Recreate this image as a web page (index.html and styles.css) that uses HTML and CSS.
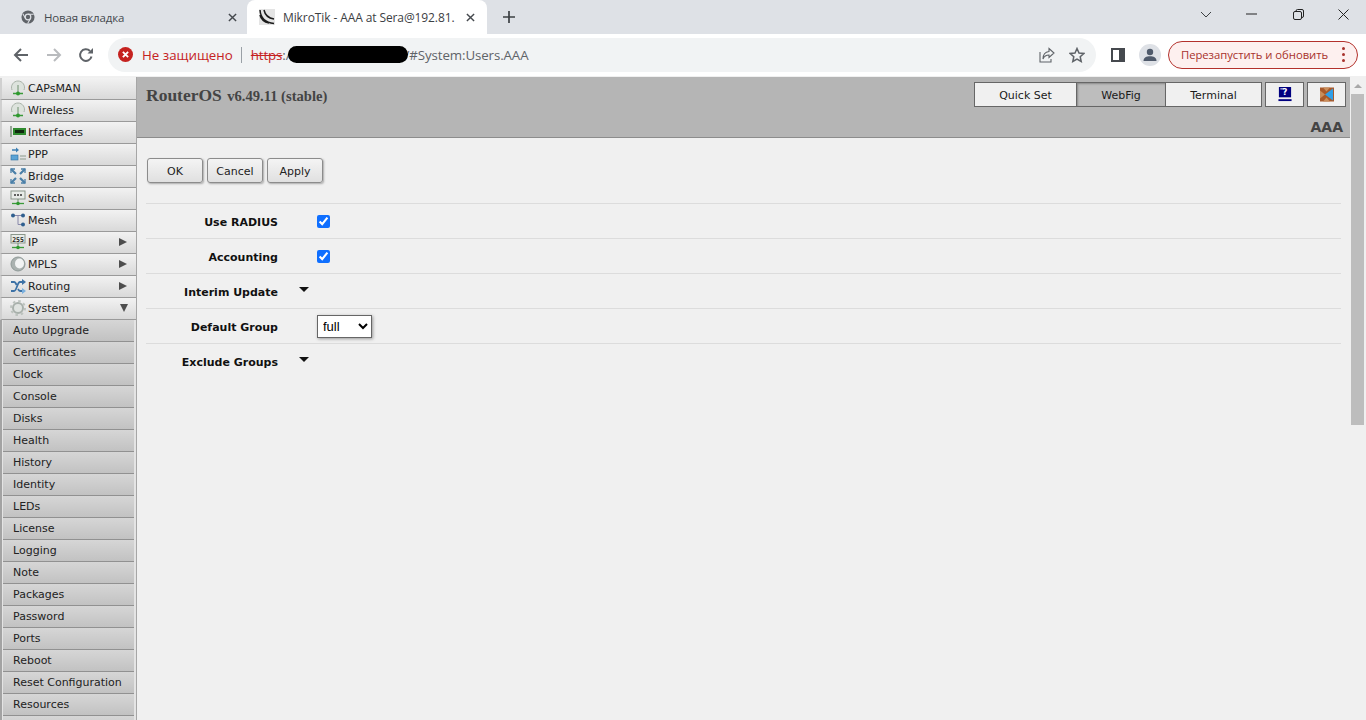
FILE: index.html
```html
<!DOCTYPE html>
<html lang="ru">
<head>
<meta charset="utf-8">
<title>MikroTik - AAA at Sera</title>
<link rel="stylesheet" href="styles.css">
</head>
<body>
<div class="tabbar">
  <div class="tab">
    <svg class="favicon" viewBox="0 0 16 16"><circle cx="8" cy="8" r="7.500" fill="#5f6368"/><circle cx="8" cy="8" r="3.200" fill="#5f6368" stroke="#dee1e6" stroke-width="1.400"/><path d="M8 4.800h6.500M5.200 9.600 2.100 4.400M10.800 9.600 7.600 15.300" stroke="#dee1e6" stroke-width="1.200" fill="none"/></svg>
    <span class="tab-title ru">Новая вкладка</span>
    <svg class="tab-x" viewBox="0 0 10 10"><path d="M1 1l8 8M9 1l-8 8" stroke="#45494e" stroke-width="1.600"/></svg>
  </div>
  <div class="tab active">
    <svg class="favicon" viewBox="0 0 16 16"><rect width="16" height="16" fill="#e4e4e4"/><path d="M1 1c.5 7 5 12.500 14 13.500M1 6c1 4 4 7 9 8M5 1c1 5 4 8 10 9" stroke="#1c1c1c" stroke-width="1.500" fill="none"/></svg>
    <span class="tab-title dark">MikroTik - AAA at Sera@192.81.</span>
    <svg class="tab-x" viewBox="0 0 10 10"><path d="M1 1l8 8M9 1l-8 8" stroke="#45494e" stroke-width="1.600"/></svg>
  </div>
  <svg class="newtab" viewBox="0 0 12 12"><path d="M6 0v12M0 6h12" stroke="#3c4043" stroke-width="1.700"/></svg>
  <div class="winctl">
    <svg class="chev" viewBox="0 0 12 8"><path d="M1 1l5 5 5-5" stroke="#3c4043" stroke-width="1" fill="none"/></svg>
    <svg class="minw" viewBox="0 0 11 2"><path d="M0 1h11" stroke="#222" stroke-width="1"/></svg>
    <svg class="maxw" viewBox="0 0 11 11"><rect x="0.500" y="2.500" width="8" height="8" rx="1.500" fill="none" stroke="#222"/><path d="M3 2.500V2a1.500 1.500 0 0 1 1.500-1.500H9A1.500 1.500 0 0 1 10.500 2v5A1.500 1.500 0 0 1 9 8.500" fill="none" stroke="#222"/></svg>
    <svg class="closew" viewBox="0 0 11 11"><path d="M.5.500l10 10M10.500.500l-10 10" stroke="#222" stroke-width="1"/></svg>
  </div>
</div>
<div class="toolbar">
  <svg class="nav back" viewBox="0 0 16 16"><path d="M15 8H2M8 2 2 8l6 6" stroke="#5f6368" stroke-width="2" fill="none"/></svg>
  <svg class="nav fwd" viewBox="0 0 16 16"><path d="M1 8h13M8 2l6 6-6 6" stroke="#b9bbbe" stroke-width="2" fill="none"/></svg>
  <svg class="nav reload" viewBox="0 0 16 16"><path d="M13.500 9.500A5.800 5.800 0 1 1 12 4" stroke="#5f6368" stroke-width="2" fill="none"/><path d="M9.500 6.500h5.500V1z" fill="#5f6368"/></svg>
  <div class="omnibox">
    <svg class="err" viewBox="0 0 16 16"><circle cx="8" cy="8" r="8" fill="#c5221f"/><path d="M5.200 5.200l5.600 5.600M10.800 5.200l-5.600 5.600" stroke="#fff" stroke-width="2"/></svg>
    <span class="insecure">Не защищено</span>
    <span class="sep"></span>
    <span class="url"><s class="https">https</s><span>:/</span><span class="redact"></span><span>/#System:Users.AAA</span></span>
    <span class="spacer"></span>
    <svg class="omni-i share" viewBox="0 0 16 16"><path d="M10 1.500 15 6l-5 4.500V8C6.500 8 5 9.500 4 12c0-4.500 2-7 6-7.500z M1 5v10h11v-3" fill="none" stroke="#5f6368" stroke-width="1.100"/></svg>
    <svg class="omni-i star" viewBox="0 0 16 16"><path d="M8 1.500l2 4.500 4.800.500-3.600 3.200 1 4.800L8 12l-4.200 2.500 1-4.800L1.200 6.500 6 6z" fill="none" stroke="#5f6368" stroke-width="1.500"/></svg>
  </div>
  <svg class="sidepanel" viewBox="0 0 14 14"><rect x="1" y="1" width="12" height="12" fill="none" stroke="#45494e" stroke-width="2"/><rect x="8" y="1" width="5" height="12" fill="#45494e"/></svg>
  <div class="avatar"><svg viewBox="0 0 14 14"><circle cx="7" cy="4" r="3.200" fill="#4f5a6b"/><path d="M0.500 13c0-3.500 3-4.800 6.500-4.800s6.500 1.300 6.500 4.800z" fill="#4f5a6b"/></svg></div>
  <div class="update"><span>Перезапустить и обновить</span><i class="dots"><b></b><b></b><b></b></i></div>
</div>
<div class="page">
  <nav class="sidebar">
    <a class="mi"><svg viewBox="0 0 16 16"><path d="M2 10a6.500 6.500 0 1 1 12 0" fill="#dde3dd" stroke="#a9b3a9"/><path d="M8 5v8" stroke="#6f8f6f"/><path d="M3 13.500h10" stroke="#3a9a3a" stroke-width="1.500"/><circle cx="8" cy="13.500" r="2" fill="#2f9a2f"/></svg>CAPsMAN</a>
    <a class="mi"><svg viewBox="0 0 16 16"><path d="M2 10a6.500 6.500 0 1 1 12 0" fill="#dde3dd" stroke="#a9b3a9"/><path d="M8 5v8" stroke="#6f8f6f"/><path d="M3 13.500h10" stroke="#3a9a3a" stroke-width="1.500"/><circle cx="8" cy="13.500" r="2" fill="#2f9a2f"/></svg>Wireless</a>
    <a class="mi"><svg viewBox="0 0 16 16"><rect x="0" y="2" width="2" height="11" fill="#9aa59a"/><rect x="3" y="4" width="13" height="7" fill="#2f8a2f"/><rect x="5" y="6" width="9" height="3" fill="#102a10"/></svg>Interfaces</a>
    <a class="mi"><svg viewBox="0 0 16 16"><path d="M2 4h5" stroke="#3d7fb3" stroke-width="1.500"/><path d="M6 1.500 9 4 6 6.500z" fill="#3d7fb3"/><rect x="1" y="9" width="7" height="5" fill="#5ba3d6" stroke="#2f6f9f" stroke-width=".6"/><path d="M10 10h6M10 13h6" stroke="#a9b3a9" stroke-width="1.500"/></svg>PPP</a>
    <a class="mi"><svg viewBox="0 0 16 16"><path d="M1 1l5 5M15 1l-5 5M1 15l5-5M15 15l-5-5" stroke="#4a7fa8" stroke-width="2.200"/><path d="M1 5V1h4M11 1h4v4M1 11v4h4M15 11v4h-4" stroke="#4a7fa8" stroke-width="1.300" fill="none"/></svg>Bridge</a>
    <a class="mi"><svg viewBox="0 0 16 16"><rect x="1" y="1" width="14" height="8" fill="#e8ece8" stroke="#8a968a"/><path d="M4 5h2M7 5h2M10 5h2" stroke="#333" stroke-width="1.500"/><path d="M8 9v5" stroke="#6f8f6f"/><path d="M2 13.500h12" stroke="#3a9a3a" stroke-width="1.300"/><circle cx="8" cy="13.500" r="1.800" fill="#2f9a2f"/></svg>Switch</a>
    <a class="mi"><svg viewBox="0 0 16 16"><path d="M3 3.500h10M8 3.500v9h5" stroke="#88a" fill="none"/><circle cx="3" cy="3.500" r="2" fill="#2f5f8f"/><circle cx="13" cy="3.500" r="2" fill="#2f5f8f"/><circle cx="13" cy="12.500" r="2" fill="#2f5f8f"/></svg>Mesh</a>
    <a class="mi more"><svg viewBox="0 0 16 16"><rect x="1" y="0.500" width="14" height="8.500" fill="#e8ece8" stroke="#8a968a"/><text x="8" y="7.500" class="ipt">255</text><path d="M8 9v5" stroke="#6f8f6f"/><path d="M2 13.500h12" stroke="#3a9a3a" stroke-width="1.300"/><circle cx="8" cy="13.500" r="1.800" fill="#2f9a2f"/></svg>IP</a>
    <a class="mi more"><svg viewBox="0 0 16 16"><circle cx="8" cy="8" r="7" fill="#aab2b0" stroke="#8f9a98"/><ellipse cx="9.500" cy="7.500" rx="4.500" ry="5" fill="#f2f4f4"/></svg>MPLS</a>
    <a class="mi more"><svg viewBox="0 0 16 16"><path d="M1 13h3c3 0 3-9 6-9h3M1 4h3c1.500 0 2 1.500 2.500 3M8 11c.5 1 1 2 2 2h3" stroke="#3d72a6" stroke-width="1.800" fill="none"/><path d="M12 1l4 3-4 3z" fill="#3d72a6"/><path d="M12 10l4 3-4 3z" fill="#7ab0de"/></svg>Routing</a>
    <a class="mi open"><svg viewBox="0 0 16 16"><circle cx="8" cy="8" r="5" fill="#dfe3e0" stroke="#a8b0ab" stroke-width="2"/><circle cx="8" cy="8" r="7" fill="none" stroke="#bcc3be" stroke-width="2" stroke-dasharray="2.500 3"/></svg>System</a>
    <div class="submenu">
      <a class="si">Auto Upgrade</a>
      <a class="si">Certificates</a>
      <a class="si">Clock</a>
      <a class="si">Console</a>
      <a class="si">Disks</a>
      <a class="si">Health</a>
      <a class="si">History</a>
      <a class="si">Identity</a>
      <a class="si">LEDs</a>
      <a class="si">License</a>
      <a class="si">Logging</a>
      <a class="si">Note</a>
      <a class="si">Packages</a>
      <a class="si">Password</a>
      <a class="si">Ports</a>
      <a class="si">Reboot</a>
      <a class="si">Reset Configuration</a>
      <a class="si">Resources</a>
      <a class="si"></a>
    </div>
  </nav>
  <main class="main">
    <header class="head">
      <div class="head-top">
        <h1 class="brand">RouterOS <small>v6.49.11 (stable)</small></h1>
        <div class="modes">
          <a class="mode qs">Quick Set</a><a class="mode wf on">WebFig</a><a class="mode tm">Terminal</a>
        </div>
        <a class="iconbtn"><svg viewBox="0 0 14 16"><rect x="0.500" width="13" height="11" fill="#000080"/><text x="7" y="9" class="qm">?</text><rect x="2" y="1.500" width="4" height="1" fill="#fff"/><rect x="0" y="13" width="14" height="2" fill="#000080"/></svg></a>
        <a class="iconbtn"><svg viewBox="0 0 14 14"><rect width="14" height="14" fill="#a8592a"/><path d="M0 3l5 4-5 4zM3 0h7L6.500 4zM3 14h7L6.500 10z" fill="#c98d5a"/><path d="M13 1v12L5 7z" fill="#2f9fe8"/></svg></a>
      </div>
      <div class="crumb">AAA</div>
    </header>
    <div class="buttons">
      <button class="btn">OK</button>
      <button class="btn">Cancel</button>
      <button class="btn">Apply</button>
    </div>
    <form class="form">
      <div class="row"><label class="lbl">Use RADIUS</label><div class="val"><input type="checkbox" class="cb" checked></div></div>
      <div class="row"><label class="lbl">Accounting</label><div class="val"><input type="checkbox" class="cb" checked></div></div>
      <div class="row"><label class="lbl">Interim Update</label><div class="val"><i class="tri"></i></div></div>
      <div class="row"><label class="lbl">Default Group</label><div class="val"><select class="sel"><option>full</option></select></div></div>
      <div class="row"><label class="lbl">Exclude Groups</label><div class="val"><i class="tri"></i></div></div>
    </form>
  </main>
  <div class="scrollbar"><i class="up"></i><div class="thumb"></div></div>
</div>
</body>
</html>
```
FILE: styles.css
```css
* { box-sizing: border-box; }
html, body { margin: 0; height: 720px; overflow: hidden; }
body { background: #fff; font-family: "DejaVu Sans", sans-serif; }
a { display: block; }

.tabbar { height: 34px; background: #dee1e6; display: flex; align-items: flex-end; padding-left: 8px; font-family: "Open Sans", sans-serif; font-size: 12px; }
.tab { width: 239px; height: 34px; padding: 0 8px 0 13px; display: flex; align-items: center; color: #45494e; flex: none; }
.tab.active { width: 240px; background: #fff; border-radius: 8px 8px 0 0; padding-left: 12px; }
.tab .tab-x { margin-right: 2px; }
.tab.active .tab-x { margin-right: 4px; }
.favicon { width: 14px; height: 14px; flex: none; }
.active .favicon { width: 16px; height: 16px; }
.tab-title { margin-left: 9px; flex: 1; white-space: nowrap; overflow: hidden; letter-spacing: -.1px; }
.active .tab-title { margin-left: 8px; }
.tab-title.ru { font-size: 11.500px; letter-spacing: -.15px; }
.tab-title.dark { color: #3c4043; }
.tab-x { width: 9px; height: 9px; flex: none; }
.newtab { width: 12px; height: 12px; margin: 0 0 11px 16px; flex: none; }
.winctl { margin-left: auto; height: 34px; display: flex; align-items: center; }
.chev { width: 12px; height: 8px; margin: 0 0 4px 0; }
.minw { width: 11px; height: 2px; margin: 0 0 6px 34px; }
.maxw { width: 11px; height: 11px; margin: 0 0 6px 36px; }
.closew { width: 11px; height: 11px; margin: 0 17px 6px 34px; }

.toolbar { height: 43px; background: #fff; display: flex; align-items: center; padding: 0 0 1px 13px; font-family: "Open Sans", sans-serif; font-size: 13.300px; border-bottom: 1px solid #f0f0f0; }
.nav { width: 16px; height: 16px; flex: none; }
.back { margin-right: 17px; }
.fwd { margin-right: 16px; }
.reload { margin-right: 14px; }
.omnibox { width: 988px; height: 34px; background: #f1f3f4; border-radius: 17px; display: flex; align-items: center; padding-left: 10px; flex: none; }
.err { width: 15px; height: 15px; flex: none; }
.insecure { margin-left: 9px; color: #c5221f; }
.sep { width: 1px; height: 16px; background: #9aa0a6; margin: 0 9px 0 8px; }
.url { display: flex; align-items: center; color: #5f6368; letter-spacing: -.1px; }
.https { color: #c5221f; }
.redact { display: block; width: 120px; height: 17px; margin: 0 -3px 0 -3px; background: #000; border-radius: 9px; position: relative; }
.spacer { flex: 1; }
.omni-i { width: 16px; height: 16px; flex: none; }
.share { margin-right: 14px; }
.star { margin-right: 11px; }
.sidepanel { width: 14px; height: 14px; margin-left: 15px; flex: none; }
.avatar { width: 22px; height: 22px; border-radius: 50%; background: #dee1e6; margin-left: 14px; display: flex; align-items: center; justify-content: center; flex: none; }
.avatar svg { width: 14px; height: 14px; }
.update { width: 190px; height: 28px; margin-left: 7px; border: 1px solid #b3312c; border-radius: 14px; background: #fdf0ef; color: #a8322c; font-size: 11.300px; display: flex; align-items: center; padding: 0 12px; justify-content: space-between; flex: none; letter-spacing: -.05px; }
.dots { display: flex; flex-direction: column; gap: 3px; }
.dots b { width: 3px; height: 3px; border-radius: 50%; background: #a8322c; display: block; }

.page { height: 643px; display: flex; background: #f0f0f0; font-size: 11px; color: #1a1a1a; overflow: hidden; }
.sidebar { width: 137px; flex: none; background: #f0f0f0; border-right: 1px solid #a6a6a6; overflow: hidden; padding-top: 1px; }
.mi { height: 22px; padding: 0 0 1px 8px; display: flex; align-items: center; gap: 2px; background: linear-gradient(#f2f2f2, #d9d9d9); border-bottom: 1px solid #9a9a9a; border-left: 2px solid #d0d0d0; position: relative; color: #222; }
.mi svg { width: 16px; height: 16px; flex: none; }
.ipt { font: bold 6.500px "DejaVu Sans Mono", monospace; text-anchor: middle; fill: #222; }
.more::after { content: ""; position: absolute; right: 9px; top: 6px; border-left: 8px solid #4d4d4d; border-top: 4px solid transparent; border-bottom: 4px solid transparent; }
.open::after { content: ""; position: absolute; right: 8px; top: 6px; border-top: 8px solid #4d4d4d; border-left: 4px solid transparent; border-right: 4px solid transparent; }
.submenu { padding: 0 2px 0 1px; background: #e4e4e4; border-left: 2px solid #a3a3a3; }
.si { height: 22px; line-height: 22px; padding-left: 10px; background: linear-gradient(#d6d6d6, #c2c2c2); border-bottom: 1px solid #919191; color: #222; white-space: nowrap; }

.main { flex: 1; min-width: 0; }
.head { height: 61px; background: #b5b5b5; border-bottom: 1px solid #8c8c8c; display: flex; flex-direction: column; }
.head-top { display: flex; align-items: flex-start; padding: 5px 4px 0 9px; }
.brand { margin: 3px auto 0 0; font: bold 17.500px "Liberation Serif", serif; color: #444; }
.brand small { margin-left: 1px; font: bold 14.600px "Liberation Serif", serif; }
.modes { display: flex; border: 1px solid #666; height: 25px; }
.mode { height: 23px; line-height: 25px; text-align: center; background: #f0f0f0; color: #1a1a1a; border-right: 1px solid #666; }
.qs { width: 102px; }
.wf { width: 89px; background: #bdbdbd; box-shadow: inset 1px 1px 2px #888; }
.tm { width: 95px; border-right: 0; }
.iconbtn { width: 39px; height: 25px; background: #f0f0f0; border: 1px solid #666; margin-left: 3px; display: flex; align-items: center; justify-content: center; }
.iconbtn svg { width: 14px; height: 15px; }
.qm { font: bold 9px "DejaVu Sans", sans-serif; text-anchor: middle; fill: #fff; }
.crumb { margin-top: auto; text-align: right; padding: 0 7px 1px 0; font: bold 14px "DejaVu Sans", sans-serif; color: #444; line-height: 17px; }

.buttons { display: flex; gap: 4px; padding: 20px 0 0 10px; }
.btn { width: 56px; height: 25px; padding: 2px 0 0; font: 11px "DejaVu Sans", sans-serif; color: #222; background: linear-gradient(#f4f4f4, #e0e0e0); border: 1px solid #8c8c8c; border-radius: 3px; box-shadow: 1px 1px 2px #aaa; }

.form { margin: 20px 9px 0 9px; }
.row { height: 35px; border-top: 1px solid #dcdcdc; display: flex; align-items: center; }
.lbl { width: 132px; padding-top: 2px; text-align: right; font-weight: bold; color: #111; }
.val { margin-left: 39px; display: flex; align-items: center; }
.cb { width: 13px; height: 13px; margin: 0; accent-color: #0f6fff; }
.tri { display: block; margin: -4px 0 0 -18px; border-top: 5px solid #111; border-left: 5.500px solid transparent; border-right: 5.500px solid transparent; }
.sel { width: 55px; height: 23px; font: 13px "Liberation Sans", sans-serif; background: #fff; border: 1px solid #666; box-shadow: 1px 1px 3px #999; padding-left: 1px; border-radius: 0; }

.scrollbar { width: 16px; flex: none; background: #f0f0f0; position: relative; padding-top: 17px; }
.up { position: absolute; top: 7px; left: 4px; border-bottom: 4px solid #a8a8a8; border-left: 4px solid transparent; border-right: 4px solid transparent; }
.thumb { height: 331px; width: 13px; background: #bdbdbd; margin-left: 1px; }
```
